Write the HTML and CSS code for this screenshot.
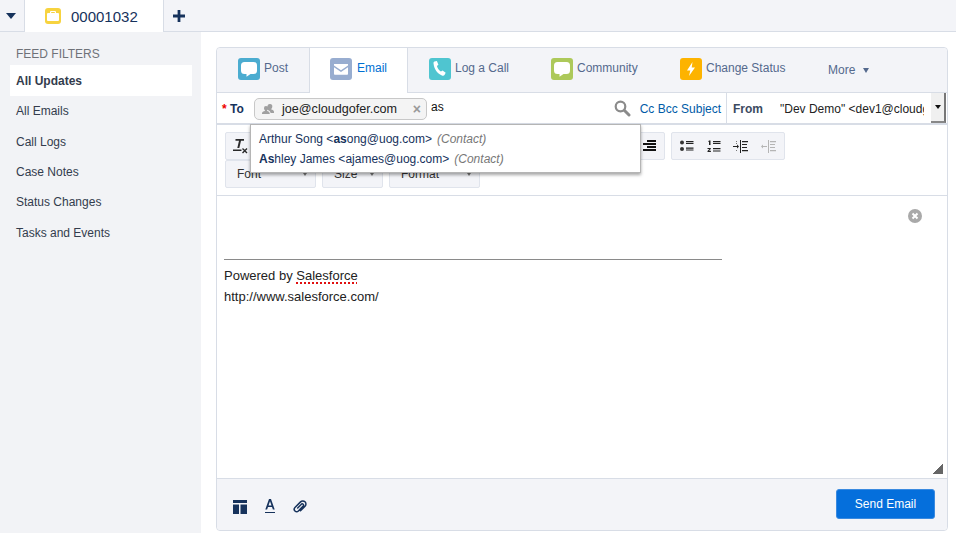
FILE: index.html
```html
<!DOCTYPE html>
<html lang="en">
<head>
<meta charset="utf-8">
<title>00001032</title>
<link rel="stylesheet" href="styles.css">
</head>
<body>
<header class="tabbar">
  <div class="tab-menu"><span class="tri-down"></span></div>
  <div class="record-tab">
    <span class="case-icon"><svg width="14" height="14" viewBox="0 0 14 14"><path fill="#fff" d="M5 2h4a1 1 0 0 1 1 1v1h2a1 1 0 0 1 1 1v6a1 1 0 0 1-1 1H2a1 1 0 0 1-1-1V5a1 1 0 0 1 1-1h2V3a1 1 0 0 1 1-1zm.2 1.100V4h3.600v-.9z"/></svg></span>
    <span class="record-name">00001032</span>
  </div>
  <div class="tab-add"><svg width="12" height="12" viewBox="0 0 13 13"><path fill="#16325c" d="M5 0h3v5h5v3H8v5H5V8H0V5h5z"/></svg></div>
</header>
<div class="layout">
  <aside class="sidebar">
    <h2 class="filters-title">FEED FILTERS</h2>
    <a class="filter active">All Updates</a>
    <a class="filter">All Emails</a>
    <a class="filter">Call Logs</a>
    <a class="filter">Case Notes</a>
    <a class="filter">Status Changes</a>
    <a class="filter">Tasks and Events</a>
  </aside>
  <main class="content">
    <section class="publisher">
      <nav class="tabs">
        <div class="tab tab-post">
          <span class="tile blue"><svg width="22" height="22" viewBox="0 0 22 22"><path fill="#fff" d="M6.500 4h9A3.500 3.500 0 0 1 19 7.500v5a3.500 3.500 0 0 1-3.500 3.500h-3L8.500 18.800V16h-2A3.500 3.500 0 0 1 3 12.500v-5A3.500 3.500 0 0 1 6.500 4z"/></svg></span>
          <span class="tab-label">Post</span>
        </div>
        <div class="tab tab-email">
          <span class="tile slate"><svg width="22" height="22" viewBox="0 0 22 22"><path fill="#fff" d="M4 6h14v1.500l-7 4.700-7-4.700zM4 9.300l7 4.700 7-4.700V16a.8.8 0 0 1-.8.8H4.800A.8.8 0 0 1 4 16z"/></svg></span>
          <span class="tab-label email-label">Email</span>
        </div>
        <div class="tab tab-call">
          <span class="tile teal"><svg width="22" height="22" viewBox="0 0 22 22"><path fill="#fff" d="M5.500 3.500l2.400-.5 1.500 3.800-1.500 1.300c.7 2.300 2.100 4.300 4 5.500l1.700-1.200 3.100 2.400-1.200 2.300c-.5.700-1.300.9-2.100.6C8.300 15.800 5.100 11.300 4.500 5.300c-.1-.8.300-1.500 1-1.800z"/></svg></span>
          <span class="tab-label">Log a Call</span>
        </div>
        <div class="tab tab-community">
          <span class="tile green"><svg width="22" height="22" viewBox="0 0 22 22"><path fill="#fff" d="M6.500 4h9A3.500 3.500 0 0 1 19 7.500v5a3.500 3.500 0 0 1-3.500 3.500h-3L8.500 18.800V16h-2A3.500 3.500 0 0 1 3 12.500v-5A3.500 3.500 0 0 1 6.500 4z"/></svg></span>
          <span class="tab-label">Community</span>
        </div>
        <div class="tab tab-status">
          <span class="tile amber"><svg width="22" height="22" viewBox="0 0 22 22"><path fill="#fff" d="M12.500 4L7 12.500h3.300L9 18l6-8.500h-3.300z"/></svg></span>
          <span class="tab-label">Change Status</span>
        </div>
        <div class="tab-more"><span class="more-label">More</span><span class="more-caret"></span></div>
      </nav>
      <div class="address-row">
        <div class="to-field">
          <label class="to-label"><span class="required">*</span> To</label>
          <span class="chip">
            <svg class="chip-people" width="14" height="12" viewBox="0 0 14 12"><path fill="#a0a0a0" d="M9 1a2.300 2.300 0 0 1 2.300 2.500c0 1-.4 1.900-1 2.300v.8c1.300.4 2.700 1 2.700 2.200V10H9.500c0-1.300-1-2.200-2.700-3v-1A4 4 0 0 1 6.500 3.500 2.400 2.400 0 0 1 9 1zM5 3a2 2 0 0 1 2 2.200c0 .9-.3 1.600-.9 2v.7C7.300 8.300 8.700 9 8.700 10v1H1V10c0-1 1.400-1.700 2.900-2.100v-.7c-.6-.4-.9-1.100-.9-2A2 2 0 0 1 5 3z"/></svg>
            <span class="chip-text">joe@cloudgofer.com</span>
            <span class="chip-x">×</span>
          </span>
          <span class="to-input">as</span>
          <svg class="search-icon" width="17" height="17" viewBox="0 0 17 17"><circle cx="6.500" cy="6.500" r="4.800" fill="none" stroke="#8b8b8b" stroke-width="2.200"/><path stroke="#8b8b8b" stroke-width="3" stroke-linecap="round" d="M10.500 10.500l4.500 4.500"/></svg>
          <a class="cc-links">Cc Bcc Subject</a>
        </div>
        <div class="from-field">
          <label class="from-label">From</label>
          <span class="from-value">"Dev Demo" &lt;dev1@cloudgofer.com&gt;</span>
          <span class="from-btn"><span class="from-caret"></span></span>
        </div>
      </div>
      <div class="toolbar">
        <div class="tool-row">
          <div class="tool-group group-clear">
            <svg width="16" height="16" viewBox="0 0 16 16"><path fill="#2a2a2a" d="M3.500 1H12v1.800H9L7.300 10H5.300L7 2.800H3.500zM1 11.500h8.500V13H1z"/><path stroke="#2a2a2a" stroke-width="1.400" d="M10.500 10.500L15 15M15 10.500L10.500 15"/></svg>
          </div>
          <div class="tool-group group-align">
            <svg width="13" height="12" viewBox="0 0 13 12"><path fill="#111" d="M4 0h9v2H4zM0 3h13v2H0zM4 6h9v2H4zM0 9h13v2H0z"/></svg>
          </div>
          <div class="tool-group group-list">
            <svg width="14" height="12" viewBox="0 0 14 12"><circle cx="2" cy="2.500" r="2" fill="#333"/><circle cx="2" cy="9" r="2" fill="#333"/><path fill="#222" d="M6 1h7.500v1.200H6zM6 3h7.500v1H6zM6 7.500h7.500v1.200H6zM6 9.500h7.500v1H6z"/></svg>
            <svg width="14" height="13" viewBox="0 0 14 13"><path fill="#222" d="M2 .5h1.500V5H2V1.700H1zM.5 8h3.300v1L2 10.800h1.900V12H.5v-1l1.900-2H.5zM6 1h7.500v1.200H6zM6 3h7.500v1H6zM6 8h7.500v1.200H6zM6 10.500h7.500v1H6z"/></svg>
            <svg width="15" height="13" viewBox="0 0 15 13"><path fill="#222" d="M7 0h1v13H7zM9 1h6v1.200H9zM9 4h5v1H9zM9 7h5v1H9zM9 10h6v1.200H9zM0 6h4V4.500L6 6.500 4 8.500V7H0z"/><path fill="#777" d="M3 1h1v1H3zM3 3h1v1H3zM3 10h1v1H3z"/></svg>
            <svg width="15" height="13" viewBox="0 0 15 13"><path fill="#b5b5b5" d="M7 0h1v13H7zM9 1h6v1.200H9zM9 4h5v1H9zM9 7h5v1H9zM9 10h6v1.200H9zM6 6H2V4.500L0 6.500 2 8.500V7h4z"/></svg>
          </div>
        </div>
        <div class="tool-row">
          <div class="select-btn sel-font"><span>Font</span><i class="sel-caret"></i></div>
          <div class="select-btn sel-size"><span>Size</span><i class="sel-caret"></i></div>
          <div class="select-btn sel-format"><span>Format</span><i class="sel-caret"></i></div>
        </div>
      </div>
      <div class="editor">
        <span class="editor-close"><svg width="14" height="14" viewBox="0 0 14 14"><circle cx="7" cy="7" r="7" fill="#a9a9a9"/><path stroke="#fff" stroke-width="2" d="M4.500 4.500l5 5M9.500 4.500l-5 5"/></svg></span>
        <div class="signature-rule"></div>
        <p class="signature">Powered by <span class="misspelled">Salesforce</span></p>
        <p class="signature">http://www.salesforce.com/</p>
        <span class="resize-grip"></span>
      </div>
      <footer class="pub-footer">
        <div class="foot-icons">
          <svg width="14" height="14" viewBox="0 0 14 14"><path fill="#16325c" d="M0 0h14v3H0zM0 4.500h6V14H0zM7.500 4.500H14V14H7.500z"/></svg>
          <svg width="12" height="15" viewBox="0 0 12 15"><path fill="#16325c" d="M5 0h2l3.700 10.500H8.900L8 8H4l-.9 2.500H1.300zM4.500 6.500h3L6 2.200zM1 13h10v1H1z"/></svg>
          <svg width="14" height="14" viewBox="0 0 15 15"><path fill="none" stroke="#16325c" stroke-width="1.600" stroke-linecap="round" d="M5 8.500l4.200-4.200a1.500 1.500 0 0 1 2 2L5.800 11.700a2.600 2.600 0 0 1-3.700-3.700l6-6a3.300 3.300 0 0 1 4.800 4.700L8 11.600"/></svg>
        </div>
        <button class="send-btn" type="button">Send Email</button>
      </footer>
      <div class="suggest-menu">
        <div class="suggest-item">Arthur Song &lt;<b>as</b>ong@uog.com&gt;<em>(Contact)</em></div>
        <div class="suggest-item"><b>As</b>hley James &lt;ajames@uog.com&gt;<em>(Contact)</em></div>
      </div>
    </section>
  </main>
</div>
</body>
</html>
```
FILE: styles.css
```css
* { box-sizing: border-box; }
html, body { height: 100%; }
body {
  margin: 0;
  background: #fff;
  color: #16325c;
  font-family: "Liberation Sans", Arial, sans-serif;
  font-size: 12px;
  overflow: hidden;
}
.tabbar {
  display: flex;
  height: 32px;
  background: #f3f4f8;
  border-bottom: 1px solid #d8dde6;
}
.tab-menu {
  width: 25px;
  height: 31px;
  display: flex;
  align-items: center;
  justify-content: center;
  padding-right: 3px;
  border-right: 1px solid #d8dde6;
}
.tri-down {
  width: 0;
  height: 0;
  margin-top: 1px;
  border: 5px solid transparent;
  border-top: 6px solid #16325c;
  border-bottom: 0;
}
.record-tab {
  width: 139px;
  height: 32px;
  display: flex;
  align-items: center;
  padding-left: 20px;
  background: #fff;
  border-right: 1px solid #d8dde6;
}
.case-icon {
  width: 16px;
  height: 16px;
  border-radius: 3px;
  background: #f7d33f;
  display: flex;
  align-items: center;
  justify-content: center;
}
.record-name {
  margin-left: 10px;
  font-size: 15px;
  color: #16325c;
}
.tab-add {
  width: 30px;
  height: 31px;
  display: flex;
  align-items: center;
  justify-content: center;
}
.layout {
  display: flex;
  height: 501px;
}
.sidebar {
  width: 201px;
  flex: none;
  padding: 15px 9px 0 10px;
  background: #f2f3f6;
}
.filters-title {
  margin: 0;
  padding-left: 6px;
  height: 18px;
  line-height: 14px;
  font-size: 12px;
  font-weight: 400;
  color: #6f7278;
}
.filter {
  display: block;
  height: 31px;
  margin-bottom: -.7px;
  padding: 1px 0 0 6px;
  line-height: 31px;
  color: #333c4d;
}
.filter.active {
  background: #fff;
  font-weight: 700;
}
.content {
  flex: 1;
  padding: 15px 8px 2px 15px;
}
.publisher {
  position: relative;
  display: flex;
  flex-direction: column;
  height: 484px;
  border: 1px solid #d8dde6;
  border-radius: 4px;
  background: #fff;
}
.tabs {
  display: flex;
  height: 45px;
  flex: none;
  background: #f3f4f8;
  border-radius: 4px 4px 0 0;
  border-bottom: 1px solid #d8dde6;
}
.tab {
  display: flex;
  align-items: center;
  height: 44px;
  padding-bottom: 2px;
}
.tab-post { width: 92px; padding-left: 21px; }
.tab-email {
  width: 99px;
  padding-left: 20px;
  height: 45px;
  padding-bottom: 3px;
  background: #fff;
  border-left: 1px solid #d8dde6;
  border-right: 1px solid #d8dde6;
}
.tab-call { width: 122px; padding-left: 21px; }
.tab-community { width: 129px; padding-left: 21px; }
.tab-status { width: 148px; padding-left: 21px; }
.tile {
  width: 22px;
  height: 22px;
  flex: none;
  border-radius: 3px;
  display: block;
}
.tile svg { display: block; }
.blue { background: #4bacd0; }
.slate { background: #98add0; }
.teal { background: #4fc5d0; }
.green { background: #adc95a; }
.amber { background: #fdb300; }
.tab-label {
  margin: -2px 0 0 4px;
  color: #54698d;
  white-space: nowrap;
}
.email-label {
  margin-left: 5px;
  color: #0070d2;
}
.tab-more {
  display: flex;
  align-items: center;
  height: 44px;
  margin-left: 21px;
  color: #54698d;
}
.more-caret {
  width: 0;
  height: 0;
  margin-left: 8px;
  border: 3.5px solid transparent;
  border-top: 5px solid #54698d;
  border-bottom: 0;
}
.address-row {
  display: flex;
  height: 32px;
  flex: none;
  border-bottom: 2px solid #d8dde6;
}
.to-field {
  display: flex;
  align-items: center;
  width: 510px;
  flex: none;
  padding: 1px 0 0 5px;
  border-right: 1px solid #d8dde6;
}
.to-label {
  width: 32px;
  font-weight: 700;
  color: #16325c;
}
.required { color: #e00; }
.chip {
  display: flex;
  align-items: center;
  width: 173px;
  height: 22px;
  padding-left: 6px;
  background: #f4f4f4;
  border: 1px solid #c8c8c8;
  border-radius: 5px;
}
.chip-text {
  margin-left: 7px;
  color: #222;
  font-size: 12.600px;
  white-space: nowrap;
}
.chip-x {
  margin-left: auto;
  margin-right: 5px;
  font-size: 14px;
  font-weight: 700;
  color: #999;
}
.to-input {
  margin-left: 4px;
  margin-top: -4px;
  color: #111;
}
.search-icon {
  margin-left: 170px;
  margin-top: -1px;
}
.cc-links {
  margin-left: 9px;
  color: #015ba7;
  white-space: nowrap;
}
.from-field {
  display: flex;
  align-items: center;
  flex: 1;
  min-width: 0;
  padding: 1px 0 0 6px;
}
.from-label {
  width: 47px;
  flex: none;
  font-weight: 700;
  color: #3c4a60;
}
.from-value {
  width: 144px;
  flex: none;
  overflow: hidden;
  white-space: nowrap;
  color: #222;
}
.from-btn {
  width: 15px;
  height: 30px;
  margin: -1px 0 0 7px;
  flex: none;
  display: flex;
  align-items: center;
  justify-content: center;
  background: #f0f0f0;
  border-right: 2px solid #777;
  border-bottom: 2px solid #888;
}
.from-caret {
  width: 0;
  height: 0;
  border: 3px solid transparent;
  border-top: 4px solid #111;
  border-bottom: 0;
}
.toolbar {
  display: flex;
  flex-direction: column;
  height: 71px;
  flex: none;
  padding: 7px 0 0 8px;
  border-bottom: 1px solid #d8dde6;
}
.tool-row {
  display: flex;
  height: 28px;
  flex: none;
}
.tool-group {
  display: flex;
  align-items: center;
  justify-content: space-around;
  height: 28px;
  background: #f3f4f8;
  border: 1px solid #e0e4ec;
  border-radius: 2px;
}
.group-clear { width: 30px; justify-content: center; }
.group-align { width: 60px; margin-left: 350px; justify-content: flex-end; padding-right: 8px; }
.group-list { width: 114px; margin-left: 6px; padding: 0 2px; }
.select-btn {
  display: flex;
  align-items: center;
  justify-content: space-between;
  height: 28px;
  padding: 0 8px 0 11px;
  margin-right: 6px;
  background: #f3f4f8;
  border: 1px solid #e0e4ec;
  border-radius: 2px;
  color: #333;
}
.sel-font { width: 91px; }
.sel-size { width: 61px; }
.sel-format { width: 91px; }
.sel-caret {
  width: 0;
  height: 0;
  border: 2.500px solid transparent;
  border-top: 3px solid #777;
  border-bottom: 0;
}
.editor {
  position: relative;
  flex: 1;
  min-height: 0;
  padding: 63px 0 0 7px;
  color: #222;
  font-size: 13px;
}
.editor-close {
  position: absolute;
  top: 13px;
  right: 25px;
  width: 14px;
  height: 14px;
}
.editor-close svg { display: block; }
.signature-rule {
  width: 498px;
  height: 1px;
  margin-bottom: 5px;
  background: #8a8a8a;
}
.signature {
  margin: 0;
  height: 21px;
  line-height: 21px;
  white-space: nowrap;
}
.misspelled {
  text-decoration: underline dotted #e01010 1.500px;
  text-underline-offset: 2px;
}
.resize-grip {
  position: absolute;
  right: 4px;
  bottom: 4px;
  width: 10px;
  height: 10px;
  background: linear-gradient(135deg, transparent 50%, #666 50%);
}
.pub-footer {
  display: flex;
  align-items: center;
  justify-content: space-between;
  height: 52px;
  flex: none;
  padding: 0 12px 0 16px;
  background: #f3f4f8;
  border-top: 1px solid #d8dde6;
  border-radius: 0 0 4px 4px;
}
.foot-icons {
  display: flex;
  align-items: center;
  gap: 17px;
  margin-top: 4px;
}
.foot-icons svg { display: block; }
.send-btn {
  width: 99px;
  height: 30px;
  margin-top: -1px;
  background: #056fdc;
  border: 1px solid #3a8ae0;
  border-radius: 3px;
  color: #fff;
  font: 12px "Liberation Sans", Arial, sans-serif;
}
.suggest-menu {
  position: absolute;
  top: 76px;
  left: 33px;
  width: 391px;
  height: 49px;
  padding: 4px 8px;
  background: #fff;
  border: 1px solid #b5b5b5;
  box-shadow: 0 2px 3px rgba(0, 0, 0, .35);
}
.suggest-item {
  height: 20px;
  line-height: 20px;
  color: #16325c;
  white-space: nowrap;
}
.suggest-item b { font-weight: 700; }
.suggest-item em {
  margin-left: 5px;
  color: #777;
}
```
